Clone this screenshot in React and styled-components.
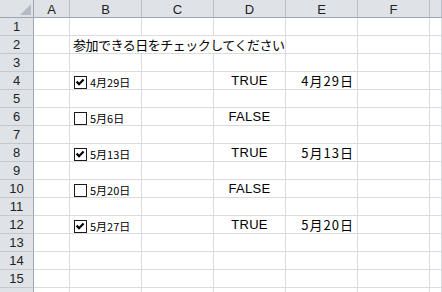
import React from "react";
import styled, { createGlobalStyle } from "styled-components";

const GlobalStyle = createGlobalStyle`
  html, body {
    margin: 0;
    padding: 0;
    background: #ffffff;
    overflow: hidden;
  }
`;

const Sheet = styled.div`
  display: grid;
  grid-template-columns: 34px 36px repeat(5, 72px) 1fr;
  grid-auto-rows: 18px;
  width: 442px;
  height: 292px;
  overflow: hidden;
  font-family: "Liberation Sans", Arial, sans-serif;
  color: #000;
`;

const Corner = styled.div`
  display: flex;
  justify-content: flex-end;
  align-items: flex-end;
  padding: 0 2px 2px 0;
  background: #dfe3e8;
  border-right: 1px solid #9ea6b0;
  border-bottom: 1px solid #9ea6b0;
  box-sizing: border-box;
`;

const ColHead = styled.div`
  background: #dfe3e8;
  border-right: 1px solid #b8bec6;
  border-bottom: 1px solid #9ea6b0;
  box-sizing: border-box;
  padding-top: 3px;
  line-height: 14px;
  font-size: 13px;
  color: #222;
  text-align: center;
`;

const RowHead = styled.div`
  background: #dfe3e8;
  border-right: 1px solid #9ea6b0;
  border-bottom: 1px solid #c3c8ce;
  box-sizing: border-box;
  line-height: 17px;
  font-size: 13px;
  color: #222;
  text-align: center;
`;

const Cell = styled.div`
  grid-column: ${(p) => (p.$span ? `span ${p.$span}` : "auto")};
  border-right: 1px solid #d9dbdd;
  border-bottom: 1px solid #d9dbdd;
  box-sizing: border-box;
  line-height: 17px;
  font-size: 13px;
  white-space: nowrap;
  text-align: ${(p) => p.$align || "left"};
  letter-spacing: ${(p) => (p.$align === "center" ? "0.3px" : "normal")};
  padding: 0 3px;
`;

const Title = styled.span`
  font-family: "Noto Sans CJK JP", sans-serif;
  letter-spacing: -0.5px;
`;

const DateText = styled.span`
  font-family: "Noto Sans CJK JP", sans-serif;
  letter-spacing: 1px;
`;

const CheckCell = styled(Cell)`
  display: flex;
  align-items: center;
  gap: 3px;
  padding: 4px 0 0 4px;
`;

const Box = styled.span`
  display: flex;
  width: 13px;
  height: 13px;
  box-sizing: border-box;
  border: 1px solid #1a1a1a;
  background: #fff;
`;

const CheckLabel = styled.span`
  font-family: "Noto Sans CJK JP", sans-serif;
  font-size: 11px;
  line-height: 13px;
`;

const CornerMark = () => (
  <svg width="11" height="11" viewBox="0 0 11 11">
    <polygon points="11,0 11,11 0,11" fill="#b5bbc3" />
  </svg>
);

const CheckBox = ({ checked, label }) => (
  <CheckCell>
    <Box>
      {checked && (
        <svg width="11" height="11" viewBox="0 0 11 11">
          <polyline
            points="1.6,4.6 4,7.2 8.6,2.4"
            fill="none"
            stroke="#000"
            strokeWidth="2.2"
          />
        </svg>
      )}
    </Box>
    <CheckLabel>{label}</CheckLabel>
  </CheckCell>
);

const columns = ["A", "B", "C", "D", "E", "F", ""];

const entries = {
  4: { checked: true, label: "4月29日", result: "TRUE", date: "4月29日" },
  6: { checked: false, label: "5月6日", result: "FALSE" },
  8: { checked: true, label: "5月13日", result: "TRUE", date: "5月13日" },
  10: { checked: false, label: "5月20日", result: "FALSE" },
  12: { checked: true, label: "5月27日", result: "TRUE", date: "5月20日" },
};

const renderRow = (n) => {
  if (n === 2) {
    return [
      <Cell key="a" />,
      <Cell key="b" $span={3}>
        <Title>参加できる日をチェックしてください</Title>
      </Cell>,
      <Cell key="e" />,
      <Cell key="f" />,
      <Cell key="g" />,
    ];
  }
  const e = entries[n];
  if (e) {
    return [
      <Cell key="a" />,
      <CheckBox key="b" checked={e.checked} label={e.label} />,
      <Cell key="c" />,
      <Cell key="d" $align="center">{e.result}</Cell>,
      <Cell key="e" $align="right">
        {e.date && <DateText>{e.date}</DateText>}
      </Cell>,
      <Cell key="f" />,
      <Cell key="g" />,
    ];
  }
  return columns.map((c, i) => <Cell key={i} />);
};

export default function App() {
  const rows = Array.from({ length: 16 }, (_, i) => i + 1);
  return (
    <>
      <GlobalStyle />
      <Sheet>
        <Corner>
          <CornerMark />
        </Corner>
        {columns.map((c, i) => (
          <ColHead key={i}>{c}</ColHead>
        ))}
        {rows.map((n) => (
          <React.Fragment key={n}>
            <RowHead>{n < 16 ? n : ""}</RowHead>
            {renderRow(n)}
          </React.Fragment>
        ))}
      </Sheet>
    </>
  );
}
